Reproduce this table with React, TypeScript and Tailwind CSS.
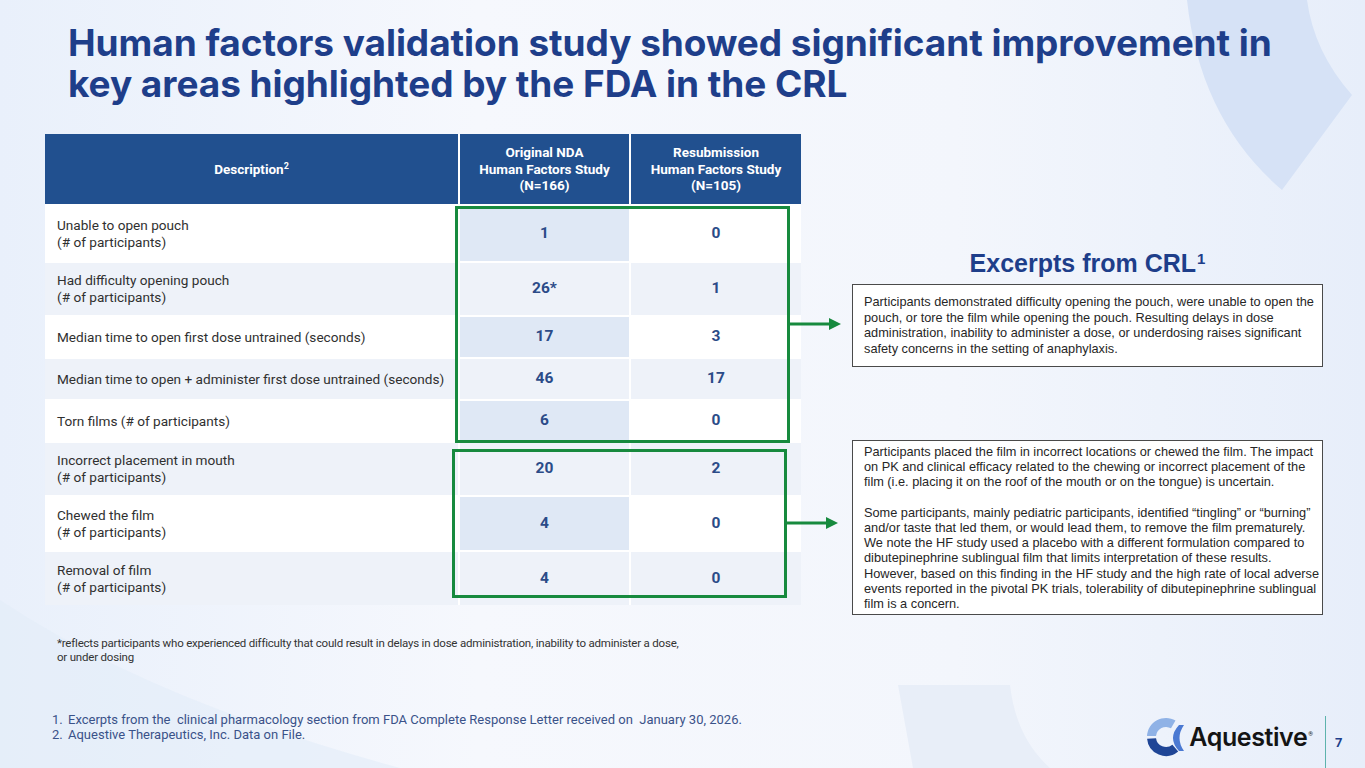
import React from "react";

type Row = {
  label: string;
  sub?: string;
  v1: string;
  v2: string;
  h: string;
  alt: boolean;
};

const rows: Row[] = [
  { label: "Unable to open pouch", sub: "(# of participants)", v1: "1", v2: "0", h: "h-[57px]", alt: false },
  { label: "Had difficulty opening pouch", sub: "(# of participants)", v1: "26*", v2: "1", h: "h-[54px]", alt: true },
  { label: "Median time to open first dose untrained (seconds)", v1: "17", v2: "3", h: "h-[42px]", alt: false },
  { label: "Median time to open + administer first dose untrained (seconds)", v1: "46", v2: "17", h: "h-[42px]", alt: true },
  { label: "Torn films (# of participants)", v1: "6", v2: "0", h: "h-[42px]", alt: false },
  { label: "Incorrect placement in mouth", sub: "(# of participants)", v1: "20", v2: "2", h: "h-[54px]", alt: true },
  { label: "Chewed the film", sub: "(# of participants)", v1: "4", v2: "0", h: "h-[55px]", alt: false },
  { label: "Removal of film", sub: "(# of participants)", v1: "4", v2: "0", h: "h-[55px]", alt: true },
];

const excerptA = [
  "Participants demonstrated difficulty opening the pouch, were unable to open the",
  "pouch, or tore the film while opening the pouch. Resulting delays in dose",
  "administration, inability to administer a dose, or underdosing raises significant",
  "safety concerns in the setting of anaphylaxis.",
];

const excerptB1 = [
  "Participants placed the film in incorrect locations or chewed the film. The impact",
  "on PK and clinical efficacy related to the chewing or incorrect placement of the",
  "film (i.e. placing it on the roof of the mouth or on the tongue) is uncertain.",
];

const excerptB2 = [
  "Some participants, mainly pediatric participants, identified \u201ctingling\u201d or \u201cburning\u201d",
  "and/or taste that led them, or would lead them, to remove the film prematurely.",
  "We note the HF study used a placebo with a different formulation compared to",
  "dibutepinephrine sublingual film that limits interpretation of these results.",
  "However, based on this finding in the HF study and the high rate of local adverse",
  "events reported in the pivotal PK trials, tolerability of dibutepinephrine sublingual",
  "film is a concern.",
];

// green arrow pointing right, drawn over the gap between table and excerpts
const Arrow = ({ className }: { className: string }) => (
  <svg className={className} width="52" height="14" viewBox="0 0 52 14">
    <rect x="0" y="5.5" width="42" height="3" fill="#178a3e" />
    <polygon points="40,1 52,7 40,13" fill="#178a3e" />
  </svg>
);

const LogoMark = () => (
  <svg width="40" height="40" viewBox="0 0 40 40">
    <path d="M1 19 A19 19 0 0 1 29.5 3.55 L25 11.34 A10 10 0 0 0 10 19 Z" fill="#8fb2e6" />
    <path d="M1.07 21.66 A19 19 0 0 0 32.2 34.55 L26.43 27.66 A10 10 0 0 1 10.04 21.15 Z" fill="#1f4596" />
    <path d="M33 8 Q21 21 33 34 L38 34 Q29 21 38 8 Z" fill="#4b79d2" />
  </svg>
);

export default function App() {
  return (
    <div className="relative w-[1365px] h-[768px] overflow-hidden bg-[linear-gradient(90deg,#e9f0fb_0%,#f6f8fd_35%,#f3f6fc_70%,#e7eefa_100%)] font-['Roboto',sans-serif]">
      {/* background decoration */}
      <svg className="absolute left-0 top-0" width="1365" height="768" viewBox="0 0 1365 768">
        <path d="M1187 0 Q1200 120 1282 190 L1352 95 Q1314 52 1307 0 Z" fill="#d6e2f6" />
        <path d="M898 685 L1010 685 Q1016 738 1050 768 L913 768 Z" fill="#e8eef8" />
        <path d="M0 600 Q150 700 400 768 L0 768 Z" fill="#e2ecf9" opacity="0.6" />
      </svg>

      <div className="relative flex flex-col h-full">
        <h1 className="pl-[68px] pt-[22px] text-[37px] leading-[41px] font-bold text-[#1e3e8a] tracking-[-0.05px] font-['Inter',sans-serif]">
          Human factors validation study showed significant improvement in
          <br />
          key areas highlighted by the FDA in the CRL
        </h1>

        <div className="flex mt-[30px] pl-[45px]">
          {/* table */}
          <div className="relative w-[756px]">
            <div className="flex h-[70px] bg-[#21508f] text-white text-[13.5px] leading-[16.5px] font-bold">
              <div className="w-[413px] flex items-center justify-center">
                <span>
                  Description<sup className="text-[9px]">2</sup>
                </span>
              </div>
              <div className="w-[171px] border-l-2 border-white flex items-center justify-center text-center">
                Original NDA
                <br />
                Human Factors Study
                <br />
                (N=166)
              </div>
              <div className="w-[172px] border-l-2 border-white flex items-center justify-center text-center">
                Resubmission
                <br />
                Human Factors Study
                <br />
                (N=105)
              </div>
            </div>
            {rows.map((r, i) => (
              <div
                key={i}
                className={`flex border-t-2 border-white ${r.h} ${r.alt ? "bg-[#eef2f9]" : "bg-white"}`}
              >
                <div className="w-[413px] flex flex-col justify-center pl-[12px] text-[13.6px] leading-[17px] text-[#303030]">
                  <span>{r.label}</span>
                  {r.sub && <span>{r.sub}</span>}
                </div>
                <div
                  className={`w-[171px] border-l-2 border-white flex items-center justify-center text-[15.5px] font-bold text-[#2b4b88] ${
                    r.alt ? "" : "bg-[#dfe8f5]"
                  }`}
                >
                  {r.v1}
                </div>
                <div className="w-[172px] border-l-2 border-white flex items-center justify-center text-[15.5px] font-bold text-[#2b4b88]">
                  {r.v2}
                </div>
              </div>
            ))}

            {/* highlight boxes */}
            <div className="absolute left-[410px] top-[72px] w-[335px] h-[237px] border-[3px] border-[#178a3e]" />
            <div className="absolute left-[407px] top-[315px] w-[335px] h-[149px] border-[3px] border-[#178a3e]" />
            <Arrow className="absolute left-[744px] top-[183px]" />
            <Arrow className="absolute left-[741px] top-[382px]" />
          </div>

          {/* excerpts */}
          <div className="ml-[51px] w-[471px] flex flex-col font-['Liberation_Sans',Arial,sans-serif]">
            <div className="mt-[114px] h-[36px] leading-[30px] text-center text-[25px] font-bold text-[#1e3e8a]">
              Excerpts from CRL<sup className="text-[15px] relative -top-[8px] ml-[1px]">1</sup>
            </div>
            <div className="bg-white border border-[#4a4a4a] h-[83px] pl-[11px] pt-[9px] text-[12.75px] leading-[15.7px] text-[#262626] whitespace-nowrap">
              {excerptA.map((l, i) => (
                <div key={i}>{l}</div>
              ))}
            </div>
            <div className="mt-[73px] bg-white border border-[#4a4a4a] h-[175px] pl-[11px] pt-[3px] text-[12.75px] leading-[15.2px] text-[#262626] whitespace-nowrap">
              {excerptB1.map((l, i) => (
                <div key={i}>{l}</div>
              ))}
              <div className="h-[15.2px]" />
              {excerptB2.map((l, i) => (
                <div key={i}>{l}</div>
              ))}
            </div>
          </div>
        </div>

        <p className="mt-[21px] pl-[57px] text-[11.5px] leading-[14px] text-[#333] tracking-[-0.2px]">
          *reflects participants who experienced difficulty that could result in delays in dose administration, inability to administer a dose,
          <br />
          or under dosing
        </p>

        <div className="flex mt-[48px] flex-1">
          <ol className="pl-[52px] text-[13px] leading-[15px] text-[#3a5289]">
            <li className="flex">
              <span className="w-[16px]">1.</span>
              <span>Excerpts from the&nbsp; clinical pharmacology section from FDA Complete Response Letter received on&nbsp; January 30, 2026.</span>
            </li>
            <li className="flex">
              <span className="w-[16px]">2.</span>
              <span>Aquestive Therapeutics, Inc. Data on File.</span>
            </li>
          </ol>

          <div className="ml-auto flex items-start mt-[4px]">
            <div className="flex items-center mt-[1px]">
              <LogoMark />
              <span className="ml-[3px] text-[25px] font-semibold text-[#141414] tracking-[-0.4px] font-['Inter',sans-serif] leading-none">
                Aquestive
              </span>
              <span className="text-[6px] self-start mt-[12px] ml-[1px] text-[#141414]">®</span>
            </div>
            <div className="ml-[12px] w-px h-full bg-[#5db3ad]" />
            <div className="w-[39px] pl-[9px] pt-[17px] text-[13px] font-bold text-[#1e3e8a]">7</div>
          </div>
        </div>
      </div>
    </div>
  );
}
